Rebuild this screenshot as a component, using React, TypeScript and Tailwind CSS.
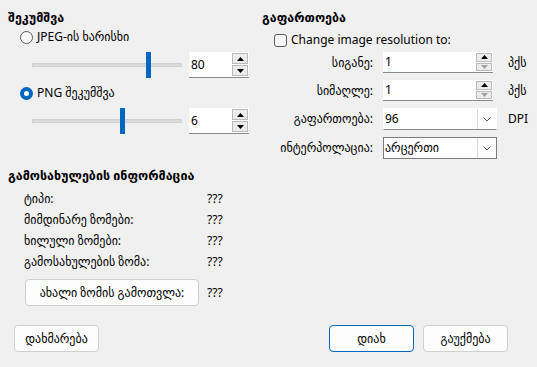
import React from "react";

const font = { fontFamily: '"Segoe UI", "Noto Sans", "DejaVu Sans", sans-serif' };

function Spin({ value, wide, dimDown }: { value: string; wide?: boolean; dimDown?: boolean }) {
  return (
    <div className={`flex bg-white border-b border-[#8a8a8a] ${wide ? "w-[110px] h-[21px]" : "w-[60px] h-[26px]"}`}>
      <div className="flex-1 flex items-center pl-[2px] text-[12px] text-black">{value}</div>
      <div className="w-[17px] flex flex-col justify-center gap-px py-px pr-px">
        <div className="flex-1 border border-[#b9b9b9] bg-[#ececec] flex items-center justify-center">
          <svg width="7" height="4" viewBox="0 0 7 4"><path d="M3.5 0L7 4H0z" fill="#000" /></svg>
        </div>
        <div className="flex-1 border border-[#b9b9b9] bg-[#ececec] flex items-center justify-center">
          <svg width="7" height="4" viewBox="0 0 7 4"><path d="M0 0h7L3.5 4z" fill={dimDown ? "#a0a0a0" : "#000"} /></svg>
        </div>
      </div>
    </div>
  );
}

function Slider({ pos }: { pos: number }) {
  return (
    <div className="relative w-[150px] h-[26px] flex items-center">
      <div className="w-full h-[4px] bg-[#dadada] border border-[#d0d0d0]" />
      <div className="absolute top-0 h-[26px] w-[5px] bg-[#0067c0]" style={{ left: pos }} />
    </div>
  );
}

function Combo({ value, focused }: { value: string; focused?: boolean }) {
  return (
    <div className={`w-[114px] h-[22px] flex bg-white border ${focused ? "border-[#7a7a7a]" : "border-transparent border-b-[#8a8a8a]"}`}>
      <div className="flex-1 flex items-center pl-[1px] text-[12px] text-black">{value}</div>
      <div className="w-[19px] border-l border-[#d9d9d9] flex items-center justify-center">
        <svg width="8" height="5" viewBox="0 0 8 5"><path d="M0.5 0.5L4 4L7.5 0.5" stroke="#555" fill="none" strokeWidth="1" /></svg>
      </div>
    </div>
  );
}

function Btn({ children, primary, w }: { children: React.ReactNode; primary?: boolean; w: string }) {
  return (
    <div className={`${w} h-[27px] rounded-[4px] bg-[#fdfdfd] border flex items-center justify-center text-[12px] text-black ${primary ? "border-[#0067c0]" : "border-[#d0d0d0]"}`}>
      {children}
    </div>
  );
}

export default function App() {
  const info = [
    ["ტიპი:", "???"],
    ["მიმდინარე ზომები:", "???"],
    ["ხილული ზომები:", "???"],
    ["გამოსახულების ზომა:", "???"],
  ];
  const rows: [string, React.ReactNode, string][] = [
    ["სიგანე:", <Spin value="1" wide dimDown />, "პქს"],
    ["სიმაღლე:", <Spin value="1" wide dimDown />, "პქს"],
    ["გაფართოება:", <Combo value="96" />, "DPI"],
    ["ინტერპოლაცია:", <Combo value="არცერთი" focused />, ""],
  ];
  return (
    <div className="w-[537px] h-[367px] bg-[#f0f0f0] text-[12px] text-black overflow-hidden flex flex-col" style={font}>
      <div className="flex">
        <div className="w-[262px] pl-[8px] flex flex-col">
          <div className="h-[20px] mt-[8px] flex items-center font-bold text-[12.5px]">შეკუმშვა</div>
          <div className="h-[16px] mt-[1px] flex items-center gap-[4px] pl-[12px]">
            <div className="w-[13px] h-[13px] rounded-full border border-[#5a5a5a] bg-[#f7f7f7]" />
            <span>JPEG-ის ხარისხი</span>
          </div>
          <div className="flex items-center mt-[7px] pl-[24px] gap-[7px]">
            <Slider pos={114} />
            <Spin value="80" />
          </div>
          <div className="h-[16px] mt-[7px] flex items-center gap-[4px] pl-[12px]">
            <div className="w-[13px] h-[13px] rounded-full bg-[#0067c0] flex items-center justify-center">
              <div className="w-[5px] h-[5px] rounded-full bg-white" />
            </div>
            <span>PNG შეკუმშვა</span>
          </div>
          <div className="flex items-center mt-[7px] pl-[24px] gap-[7px]">
            <Slider pos={88} />
            <Spin value="6" />
          </div>
          <div className="h-[20px] mt-[32px] flex items-center font-bold text-[12.5px]">გამოსახულების ინფორმაცია</div>
          <div className="flex flex-col mt-[2px]">
            {info.map(([l, v], i) => (
              <div key={i} className="h-[21px] flex items-center">
                <span className="w-[199px] pl-[16px]">{l}</span>
                <span>{v}</span>
              </div>
            ))}
          </div>
          <div className="flex items-center mt-[7px] pl-[17px]">
            <Btn w="w-[174px]">ახალი ზომის გამოთვლა:</Btn>
            <span className="ml-[8px]">???</span>
          </div>
        </div>
        <div className="flex-1 flex flex-col">
          <div className="h-[20px] mt-[8px] flex items-center font-bold text-[12.5px]">გაფართოება</div>
          <div className="h-[16px] mt-[4px] flex items-center gap-[4px] pl-[12px]">
            <div className="w-[13px] h-[13px] rounded-[3px] border border-[#5a5a5a] bg-[#f7f7f7]" />
            <span>Change image resolution to:</span>
          </div>
          <div className="flex flex-col mt-[4px] gap-[7px]">
            {rows.map(([l, c, u], i) => (
              <div key={i} className="flex items-center">
                <span className="w-[121px] text-right pr-[10px]">{l}</span>
                <div className="w-[125px]">{c}</div>
                <span>{u}</span>
              </div>
            ))}
          </div>
        </div>
      </div>
      <div className="flex items-center mt-auto mb-[15px] px-[14px]">
        <Btn w="w-[85px]">დახმარება</Btn>
        <div className="flex-1" />
        <Btn w="w-[85px]" primary>დიახ</Btn>
        <div className="w-[9px]" />
        <Btn w="w-[85px]">გაუქმება</Btn>
        <div className="w-[15px]" />
      </div>
    </div>
  );
}
